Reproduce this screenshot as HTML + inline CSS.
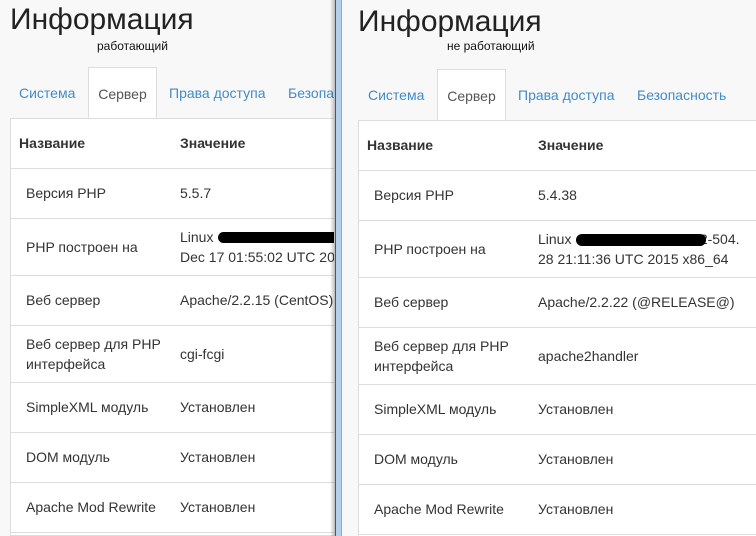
<!DOCTYPE html>
<html><head><meta charset="utf-8"><style>
*{margin:0;padding:0;box-sizing:border-box}
html,body{width:756px;height:536px;overflow:hidden}
body{background:#f8f8f8;font-family:"Liberation Sans",sans-serif;color:#333;position:relative}
.p{position:absolute;top:0;height:536px;overflow:hidden;background:#f8f8f8}
.t{position:absolute;font-size:30px;color:#222}
.s{position:absolute;font-size:12px;color:#111}
.tab{position:absolute;font-size:14px;color:#428bca;white-space:nowrap}
.act{position:absolute;background:#fff;border:1px solid #ddd;border-bottom:none;font-size:14px;color:#555;text-align:center}
.tb{position:absolute;background:#fff;border:1px solid #ddd;width:430px;height:418px;overflow:hidden}
.r{position:absolute;left:0;width:430px;border-top:1px solid #ddd}
.c{position:absolute;font-size:14px;white-space:nowrap;line-height:20px}
.h{font-weight:bold}
.blk{position:absolute;background:#000;border-radius:6px}
</style></head><body>
<div class="p" style="left:0;width:334px">
<div class="t" style="left:10px;top:3px">Информация</div>
<div class="s" style="left:97px;top:39px">работающий</div>
<div class="tab" style="left:19px;top:85px">Система</div>
<div class="act" style="left:88px;top:67px;width:69px;height:52px;line-height:52px">Сервер</div>
<div class="tab" style="left:169px;top:85px">Права доступа</div>
<div class="tab" style="left:288px;top:85px">Безопасность</div>
<div class="tb" style="left:10px;top:118px">
<div class="c h" style="left:8px;top:14px">Название</div><div class="c h" style="left:169px;top:14px">Значение</div>
<div class="r" style="top:49px"></div>
<div class="c" style="left:15px;top:64px">Версия PHP</div><div class="c" style="left:169px;top:64px">5.5.7</div>
<div class="r" style="top:99px"></div>
<div class="c" style="left:15px;top:118px">PHP построен на</div><div class="c" style="left:169px;top:108px">Linux<br>Dec 17 01:55:02 UTC 2013</div>
<div class="blk" style="left:207px;top:113px;width:130px;height:11px"></div>
<div class="r" style="top:156px"></div>
<div class="c" style="left:15px;top:171px">Веб сервер</div><div class="c" style="left:169px;top:171px">Apache/2.2.15 (CentOS)</div>
<div class="r" style="top:206px"></div>
<div class="c" style="left:15px;top:215px">Веб сервер для PHP<br>интерфейса</div><div class="c" style="left:169px;top:225px">cgi-fcgi</div>
<div class="r" style="top:263px"></div>
<div class="c" style="left:15px;top:278px">SimpleXML модуль</div><div class="c" style="left:169px;top:278px">Установлен</div>
<div class="r" style="top:313px"></div>
<div class="c" style="left:15px;top:328px">DOM модуль</div><div class="c" style="left:169px;top:328px">Установлен</div>
<div class="r" style="top:363px"></div>
<div class="c" style="left:15px;top:378px">Apache Mod Rewrite</div><div class="c" style="left:169px;top:378px">Установлен</div>
<div class="r" style="top:413px"></div>
</div>
</div>
<div style="position:absolute;left:330px;top:0;width:5px;height:536px;background:linear-gradient(90deg,rgba(0,0,0,0),rgba(0,0,0,.25))"></div>
<div style="position:absolute;left:335px;top:0;width:1px;height:536px;background:#555"></div>
<div style="position:absolute;left:336px;top:0;width:5px;height:536px;background:#b4d0ec"></div>
<div style="position:absolute;left:341px;top:0;width:1px;height:536px;background:#9aa"></div>
<div class="p" style="left:342px;width:414px">
<div class="t" style="left:16px;top:5px">Информация</div>
<div class="s" style="left:105px;top:39px">не работающий</div>
<div class="tab" style="left:26px;top:87px">Система</div>
<div class="act" style="left:95px;top:69px;width:69px;height:52px;line-height:52px">Сервер</div>
<div class="tab" style="left:176px;top:87px">Права доступа</div>
<div class="tab" style="left:295px;top:87px">Безопасность</div>
<div class="tb" style="left:16px;top:120px">
<div class="c h" style="left:8px;top:14px">Название</div><div class="c h" style="left:179px;top:14px">Значение</div>
<div class="r" style="top:49px"></div>
<div class="c" style="left:15px;top:64px">Версия PHP</div><div class="c" style="left:179px;top:64px">5.4.38</div>
<div class="r" style="top:99px"></div>
<div class="c" style="left:15px;top:118px">PHP построен на</div><div class="c" style="left:179px;top:108px">Linux&nbsp;&nbsp;&nbsp;&nbsp;&nbsp;&nbsp;&nbsp;&nbsp;&nbsp;&nbsp;&nbsp;&nbsp;&nbsp;&nbsp;&nbsp;&nbsp;&nbsp;&nbsp;&nbsp;&nbsp;&nbsp;&nbsp;&nbsp;&nbsp;&nbsp;&nbsp;&nbsp;&nbsp;&nbsp;&nbsp;&nbsp;&nbsp;&nbsp;2-504.<br>28 21:11:36 UTC 2015 x86_64</div>
<div class="blk" style="left:217px;top:113px;width:130px;height:12px"></div>
<div class="r" style="top:156px"></div>
<div class="c" style="left:15px;top:171px">Веб сервер</div><div class="c" style="left:179px;top:171px">Apache/2.2.22 (@RELEASE@)</div>
<div class="r" style="top:206px"></div>
<div class="c" style="left:15px;top:215px">Веб сервер для PHP<br>интерфейса</div><div class="c" style="left:179px;top:225px">apache2handler</div>
<div class="r" style="top:263px"></div>
<div class="c" style="left:15px;top:278px">SimpleXML модуль</div><div class="c" style="left:179px;top:278px">Установлен</div>
<div class="r" style="top:313px"></div>
<div class="c" style="left:15px;top:328px">DOM модуль</div><div class="c" style="left:179px;top:328px">Установлен</div>
<div class="r" style="top:363px"></div>
<div class="c" style="left:15px;top:378px">Apache Mod Rewrite</div><div class="c" style="left:179px;top:378px">Установлен</div>
<div class="r" style="top:413px"></div>
</div>
</div>
</body></html>
